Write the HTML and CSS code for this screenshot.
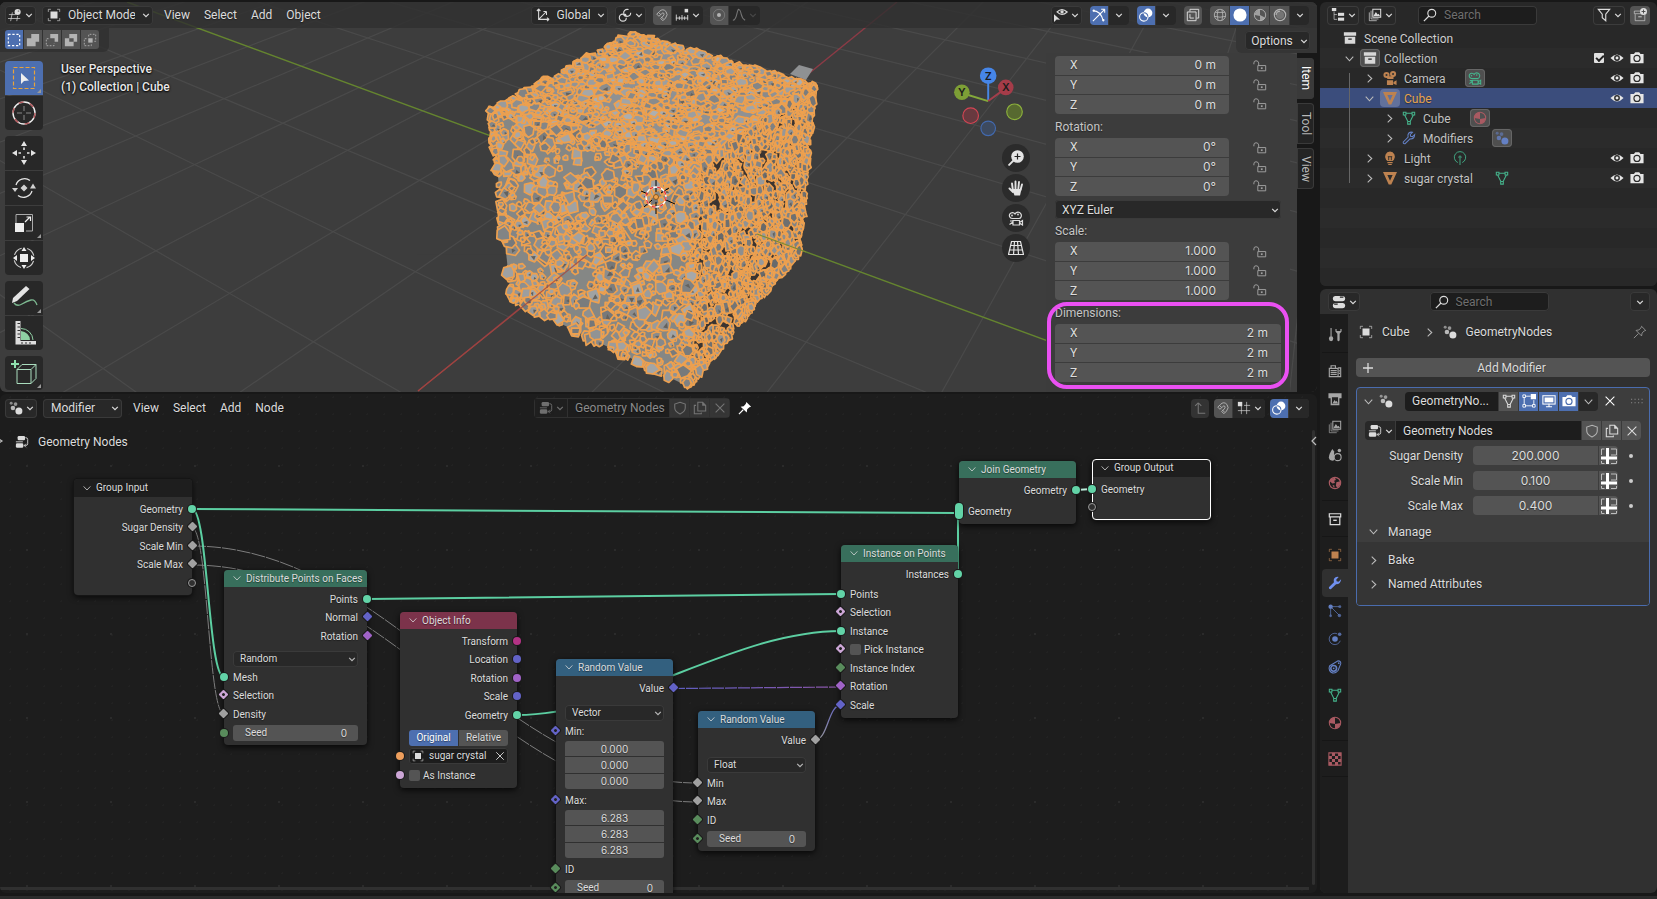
FILE: index.html
```html
<!DOCTYPE html>
<html lang="en">
<head>
<meta charset="utf-8">
<title>Geometry Nodes – Cube</title>
<link rel="stylesheet" href="styles.css">
</head>
<body class="app">
<svg class="defs" aria-hidden="true">
  <symbol id="chev" viewBox="0 0 10 10"><path d="M1.500 3.500 5 7l3.500-3.500" fill="none" stroke="currentColor" stroke-width="1.500"/></symbol>
  <symbol id="right" viewBox="0 0 10 10"><path d="M3 .8 7.500 5 3 9.200" fill="none" stroke="currentColor" stroke-width="1.200"/></symbol>
  <symbol id="down" viewBox="0 0 10 10"><path d="M.8 3 5 7.500 9.200 3" fill="none" stroke="currentColor" stroke-width="1.200"/></symbol>
  <symbol id="view3d" viewBox="0 0 16 16"><path d="M1 7.500h8M0 12h14M5 5 3 15M11 9l-1 6" fill="none" stroke="currentColor" opacity=".8"/><circle cx="11" cy="4.500" r="3.500" fill="currentColor"/><circle cx="12" cy="3.500" r="1" fill="#888"/></symbol>
  <symbol id="object" viewBox="0 0 16 16"><path d="M1.500 4.500v-3h3M11.500 1.500h3v3M14.500 11.500v3h-3M4.500 14.500h-3v-3" fill="none" stroke="currentColor" opacity=".7"/><rect x="4" y="4" width="8" height="8" fill="currentColor"/></symbol>
  <symbol id="axes" viewBox="0 0 16 16"><path d="M3 1v12h12M3 1 1 3.500M3 1l2 2.500M15 13l-2.500-2M15 13l-2.500 2M3 13l9-9M12 4v4M12 4H8.500" fill="none" stroke="currentColor" stroke-width="1.200"/></symbol>
  <symbol id="pivot" viewBox="0 0 16 16"><circle cx="10.500" cy="5.500" r="4" fill="none" stroke="currentColor" stroke-width="1.300" stroke-dasharray="20 5"/><circle cx="5.500" cy="11" r="4" fill="none" stroke="currentColor" stroke-width="1.300" stroke-dasharray="20 5"/><circle cx="8" cy="8.200" r="1.600" fill="currentColor"/></symbol>
  <symbol id="magnet" viewBox="0 0 16 16"><path d="M2 6.500 5 3.500Q9-.5 12.500 3.500 15.500 7 12 11l-3 3-2.500-2.500 3-3Q11 6.500 10 5.500 9 4.500 7.500 6l-3 3zM4 4.500 6.500 7M7 9.500l3 3" fill="none" stroke="currentColor" stroke-width="1.100" transform="translate(0 .5)"/></symbol>
  <symbol id="snapinc" viewBox="0 0 16 16"><path d="M1 11.500h14M1.500 7.500v7M5 9.500v4M8 8v6M11 9.500v4M14.500 8v6" fill="none" stroke="currentColor"/><rect x="11" y="1" width="4" height="4" fill="currentColor"/></symbol>
  <symbol id="prop" viewBox="0 0 16 16"><circle cx="8" cy="8" r="6.500" fill="none" stroke="currentColor" opacity=".4"/><circle cx="8" cy="8" r="2.300" fill="currentColor"/></symbol>
  <symbol id="falloff" viewBox="0 0 16 16"><path d="M1 14Q4 14 5.500 7T8 2q1.500 0 2.500 5T15 14" fill="none" stroke="currentColor" stroke-width="1.200"/></symbol>
  <symbol id="visible" viewBox="0 0 16 16"><path d="M0 7v9l3-2.800 4 .1z" fill="currentColor"/><path d="M3.500 4.500Q9-1 15 4.500 9 10 3.500 4.500z" fill="none" stroke="currentColor" stroke-width="1.400"/><circle cx="9.200" cy="4.400" r="1.900" fill="currentColor"/></symbol>
  <symbol id="gizmo" viewBox="0 0 16 16"><path d="M1 3Q10 3 13 15M1 15 14.500 1.500M14.500 1.500v4M14.500 1.500h-4" fill="none" stroke="currentColor" stroke-width="1.200"/><circle cx="2" cy="3" r="1.300" fill="currentColor"/><circle cx="13" cy="14" r="1.300" fill="currentColor"/></symbol>
  <symbol id="overlay" viewBox="0 0 16 16"><circle cx="10.300" cy="5.700" r="5" fill="currentColor"/><circle cx="5.500" cy="10.200" r="4.800" fill="none" stroke="currentColor" stroke-width="1.200"/><path d="M5.500 5.500A4.800 4.800 0 0 1 10.200 10" fill="none" stroke="#4d6fb0" stroke-width="1.200"/></symbol>
  <symbol id="xray" viewBox="0 0 16 16"><path d="M1.500 4.500h10v10h-10zM4.500 4V1.500h10v10H12M4.500 7v4.500h4.500" fill="none" stroke="currentColor" stroke-width="1.100"/></symbol>
  <symbol id="wire" viewBox="0 0 16 16"><g fill="none" stroke="currentColor"><circle cx="8" cy="8" r="6.500"/><path d="M1.500 9.500q6.500 2 13 0M2.500 5h11M5.800 2q-2 6 0 12.200M10.200 2q2 6 0 12.200"/></g></symbol>
  <symbol id="solid" viewBox="0 0 16 16"><circle cx="8" cy="8" r="7.500" fill="currentColor"/></symbol>
  <symbol id="matprev" viewBox="0 0 16 16"><circle cx="8" cy="8" r="6.500" fill="none" stroke="currentColor"/><path d="M8 1.500V8l6 3A6.500 6.500 0 0 1 8 14.500V9L2 8A6.500 6.500 0 0 1 8 1.500z" fill="currentColor" opacity=".8"/></symbol>
  <symbol id="rendered" viewBox="0 0 16 16"><circle cx="8" cy="8" r="6.500" fill="none" stroke="currentColor" stroke-width="1.300"/><circle cx="8" cy="8" r="4.600" fill="currentColor" opacity=".35"/><path d="M3.500 8A4.500 4.500 0 0 1 8 3.500" fill="none" stroke="currentColor" stroke-width="1.300"/></symbol>
  <symbol id="sel1" viewBox="0 0 16 16"><rect x="1.500" y="1.500" width="13" height="13" fill="none" stroke="currentColor" stroke-width="1.300" stroke-dasharray="2.600 2"/></symbol>
  <symbol id="sel2" viewBox="0 0 16 16"><path d="M6 1h9v9h-4v5H1V6h5z" fill="currentColor"/></symbol>
  <symbol id="sel3" viewBox="0 0 16 16"><path d="M6 1h9v9h-4V6H6z" fill="currentColor"/><path d="M4 6.500H1.500v8h9V12" fill="none" stroke="currentColor" stroke-dasharray="2 1.600"/></symbol>
  <symbol id="sel4" viewBox="0 0 16 16"><path d="M6 1h9v9h-4v5H1V6h5zM6 6v4h5V6z" fill="currentColor" fill-rule="evenodd"/></symbol>
  <symbol id="sel5" viewBox="0 0 16 16"><rect x="6" y="6" width="5" height="5" fill="currentColor"/><path d="M6.500 4V1.500h8v8H12M4 6.500H1.500v8h8V12" fill="none" stroke="currentColor" stroke-dasharray="2 1.600"/></symbol>
  <symbol id="lock" viewBox="0 0 16 16"><path d="M1 6V4.500Q1 2 3.500 2t3 2.500V7.500M5.500 7.500h9v6h-9z" fill="none" stroke="currentColor" stroke-width="1.100"/><rect x="9" y="9.500" width="2" height="2" fill="currentColor"/></symbol>
  <symbol id="nodes" viewBox="0 0 16 16"><circle cx="11.300" cy="11.300" r="4" fill="currentColor"/><circle cx="4.500" cy="8" r="2.600" fill="currentColor" opacity=".8"/><circle cx="2.500" cy="2.500" r="1.700" fill="currentColor" opacity=".55"/><circle cx="7.500" cy="3.500" r="2.100" fill="currentColor" opacity=".6"/></symbol>
  <symbol id="tree" viewBox="0 0 16 16"><rect x="3" y="1" width="8.500" height="5" rx="1.500" fill="currentColor"/><rect x="1" y="9.500" width="8.500" height="5" rx="1.500" fill="currentColor"/><path d="M1 7.800h8M12 3q2.500 0 2.500 2v5q0 2-2.500 2h-1.500m2-2-2 2 2 2" fill="none" stroke="currentColor"/></symbol>
  <symbol id="shield" viewBox="0 0 16 16"><path d="M8 1.500 14 3.500V8q0 4-6 6.800Q2 12 2 8V3.500z" fill="none" stroke="currentColor" stroke-width="1.200"/></symbol>
  <symbol id="dup" viewBox="0 0 16 16"><path d="M5.500 1.500H11L14.500 5v6.500h-9zM3.500 5h-2v9.500h8V13" fill="none" stroke="currentColor" stroke-width="1.200"/><path d="M10.500 1v4.500H15z" fill="currentColor"/></symbol>
  <symbol id="x" viewBox="0 0 16 16"><path d="m3 3 10 10m0-10-10 10" fill="none" stroke="currentColor" stroke-width="1.200"/></symbol>
  <symbol id="pin" viewBox="0 0 16 16"><path d="M9.500 1 15 6.500l-2 .5-2.500 2.500-.5 3.500L3 6.500 6.500 6 9 3.200z" fill="currentColor"/><path d="M6 10 1 15" stroke="currentColor" stroke-width="1.300"/></symbol>
  <symbol id="pinline" viewBox="0 0 16 16"><path d="M9.800 1.500 14.500 6.200l-1.700.6-2.400 2.400-.6 3.300L3.500 6.200 6.800 5.600 9.200 3.200zM6.200 9.800 1 15" fill="none" stroke="currentColor"/></symbol>
  <symbol id="up" viewBox="0 0 16 16"><path d="M6 2v12h8M6 2 2.500 5.500M6 2l3.500 3.500" fill="none" stroke="currentColor" stroke-width="1.200"/></symbol>
  <symbol id="snapgrid" viewBox="0 0 16 16"><path d="M5 5v10M11 1v14M1 11h14M8 5h7" fill="none" stroke="currentColor" opacity=".75"/><rect x="1" y="1" width="5" height="5" fill="currentColor"/></symbol>
  <symbol id="outliner" viewBox="0 0 16 16"><rect x="1" y="0" width="5" height="3.500" fill="currentColor"/><rect x="8" y="5.500" width="7" height="3.500" fill="currentColor"/><rect x="8" y="11" width="7" height="3.500" fill="currentColor"/><path d="M3.500 4v9H7M3.500 7.500H7" fill="none" stroke="currentColor" opacity=".7"/></symbol>
  <symbol id="images" viewBox="0 0 16 16"><path d="M5.500 1.500h9v9h-9z" fill="none" stroke="currentColor" stroke-width="1.200"/><path d="m6 9.500 3-5 2 3 1-1 2 3z" fill="currentColor"/><path d="M3.500 3v9.500H12M1.500 5v9.500H10" fill="none" stroke="currentColor" opacity=".8"/></symbol>
  <symbol id="search" viewBox="0 0 16 16"><circle cx="10" cy="6" r="4.500" fill="none" stroke="currentColor" stroke-width="1.300"/><path d="M6.800 9.200 1 15" stroke="currentColor" stroke-width="1.400"/></symbol>
  <symbol id="filter" viewBox="0 0 16 16"><path d="M1.500 1.500h13L10 7v7.500L6 11V7z" fill="none" stroke="currentColor" stroke-width="1.300"/></symbol>
  <symbol id="newcoll" viewBox="0 0 16 16"><path d="M8 3.500H1.500V6.500h12M2.500 7v7.500h11V8" fill="none" stroke="currentColor" opacity=".7"/><path d="M6 10h4" stroke="currentColor" stroke-width="1.400" opacity=".7"/><circle cx="12" cy="4" r="4" fill="currentColor"/><path d="M12 1.800v4.400M9.800 4h4.400" stroke="#444"/></symbol>
  <symbol id="box" viewBox="0 0 16 16"><path d="M1 1.500h14v4H1zM2 6.500h12v8H2z" fill="currentColor"/><rect x="6" y="8.500" width="4" height="1.600" fill="#333"/></symbol>
  <symbol id="boxline" viewBox="0 0 16 16"><path d="M1.500 2h13v3.500h-13zM2.500 6v8.500h11V6" fill="none" stroke="currentColor" stroke-width="1.400"/><path d="M6 9.500h4" stroke="currentColor" stroke-width="1.600"/></symbol>
  <symbol id="eye" viewBox="0 0 16 16"><path d="M.5 8Q8 0 15.500 8 8 16 .5 8z" fill="currentColor"/><circle cx="8" cy="8" r="3.300" fill="#282828"/><circle cx="8" cy="8" r="1.700" fill="currentColor"/></symbol>
  <symbol id="photo" viewBox="0 0 16 16"><path d="M.5 3.500h4L6 1.500h4.500L12 3.500h3.500V14H.5z" fill="currentColor"/><circle cx="8" cy="8.500" r="3.500" fill="none" stroke="#2c2c2c" stroke-width="1.300"/></symbol>
  <symbol id="photoblue" viewBox="0 0 16 16"><path d="M.5 3.500h4L6 1.500h4.500L12 3.500h3.500V14H.5z" fill="currentColor"/><circle cx="8" cy="8.500" r="3.500" fill="none" stroke="#4d6fb0" stroke-width="1.300"/></symbol>
  <symbol id="movie" viewBox="0 0 16 16"><circle cx="4" cy="4.500" r="3.500" fill="currentColor"/><circle cx="11.500" cy="3.500" r="3.500" fill="currentColor"/><path d="M4 6h8v3H5zM4.500 10.500h7V16h-7zM12 12.500l3.500-2V16L12 14.500z" fill="currentColor"/><circle cx="4" cy="4.500" r="1.200" fill="#333"/><circle cx="11.500" cy="3.500" r="1.200" fill="#333"/></symbol>
  <symbol id="movieline" viewBox="0 0 16 16"><path d="M4 8.500a3 3 0 1 1 3-4.500 3.300 3.300 0 1 1 6 3q-.5 1.500-2 1.500zM5 10.500h6.500V15H5zM11.500 12.500l3-2V15l-3-2M2 11h3M1.500 14.500 5 12" fill="none" stroke="currentColor" stroke-width="1.200"/><circle cx="4" cy="5.500" r=".9" fill="currentColor"/><circle cx="10" cy="4.500" r=".9" fill="currentColor"/></symbol>
  <symbol id="tri" viewBox="0 0 16 16"><path d="M0 1h16L9.500 15.500h-3zM5 4.500 8 11l3-6.500z" fill="currentColor" fill-rule="evenodd"/></symbol>
  <symbol id="mesh" viewBox="0 0 16 16"><path d="M4.500 2.500h7M3 4.500l4 8M13 4.500l-4 8M1.500 1.500h3v3h-3zM11.500 1.500h3v3h-3zM6.500 12h3v3h-3z" fill="none" stroke="currentColor" stroke-width="1.200"/></symbol>
  <symbol id="wrenchline" viewBox="0 0 16 16"><path d="M14.500 4 12 6.500 9.800 6 9.500 4 12 1.500Q8 .5 6.800 4.500L7 7 1.500 12.500q-.5 2.500 2 2L9.200 9q5 .5 5.300-5z" fill="none" stroke="currentColor" stroke-width="1.200"/></symbol>
  <symbol id="wrench" viewBox="0 0 16 16"><path d="M15 3.800 12 6.500 9.800 6 9.500 4 12.200 1Q7.500.5 6.500 4.500L6.800 7 1 12.800q-.3 2.700 2.200 2.400L9.200 9.500q5.500 0 5.800-5.700z" fill="currentColor"/></symbol>
  <symbol id="bulb" viewBox="0 0 16 16"><path d="M8 .5a6 6 0 0 1 4.500 9.500L11 11.500H5L3.500 10A6 6 0 0 1 8 .5zM5 12.500h6V14H5zM6 14.800h4V16H6z" fill="currentColor"/><path d="M5.500 6.500h5M6.500 6.500v4M9.500 6.500v4" fill="none" stroke="#282828"/></symbol>
  <symbol id="lightdata" viewBox="0 0 16 16"><path d="M5.500 13.200a6.500 6.500 0 1 1 5 0M8 9v7" fill="none" stroke="currentColor"/><circle cx="8" cy="7" r="1.300" fill="none" stroke="currentColor"/></symbol>
  <symbol id="sphere" viewBox="0 0 16 16"><circle cx="8" cy="8" r="6.500" fill="none" stroke="currentColor" stroke-width="1.200"/><path d="M8 1.500V9L1.500 8A6.500 6.500 0 0 1 8 1.500zM8 9l6.300-1A6.500 6.500 0 0 1 8 14.500z" fill="currentColor"/></symbol>
  <symbol id="propsed" viewBox="0 0 16 16"><rect x="1" y="1" width="14" height="6" rx="3" fill="currentColor"/><rect x="1" y="9" width="14" height="6" rx="3" fill="currentColor"/><path d="M9 2.500h4M2.500 10.500h4" stroke="#222" stroke-width="1.500"/></symbol>
  <symbol id="tool" viewBox="0 0 16 16"><path d="M3.500 0v9" stroke="currentColor" stroke-width="1.300"/><path d="M3.500 9Q6 9 6 12t-2.500 3Q1 15 1 12t2.500-3zM8.500 1v3l2.200 2.500V14q1.300 2 2.600 0V6.500L15.500 4V1h-1.300v2.500h-4.400V1z" fill="currentColor"/></symbol>
  <symbol id="render" viewBox="0 0 16 16"><path d="M1.500 5h10v9.500h-10zM3.500 5V2h5v3M11.500 4.500h3v10h-3" fill="none" stroke="currentColor" stroke-width="1.300"/><path d="M3 7.500h7M3 9.800h7M3 12h7M13 7v1.500M13 10v1.500" stroke="currentColor" stroke-width="1.300"/></symbol>
  <symbol id="output" viewBox="0 0 16 16"><path d="M.5 1.500h15V7h-2.500v8H3V7H.5z" fill="currentColor"/><path d="M4.500 6h7v7.500h-7z" fill="#222"/><path d="m5 13 2.500-4L9 11l1-1 1.500 3z" fill="currentColor"/></symbol>
  <symbol id="scene" viewBox="0 0 16 16"><path d="M5 1Q1 7 1 10.500 1 14 5 14.500l2-.5V4z" fill="currentColor"/><circle cx="11" cy="10.500" r="4" fill="none" stroke="currentColor" stroke-width="1.300"/><circle cx="13" cy="2.800" r="2" fill="currentColor"/></symbol>
  <symbol id="world" viewBox="0 0 16 16"><circle cx="8" cy="8" r="6.500" fill="none" stroke="currentColor" stroke-width="1.300"/><path d="M3 3.500 8 2l1 2.500-2 1L8 8 5 8.500 2 6zM9.500 7l4.500-1v4l-3 3.500-2-2zM5 10l2.500 1L7 14z" fill="currentColor"/></symbol>
  <symbol id="particles" viewBox="0 0 16 16"><path d="M3 3v10M3 3l10 10M3 3h10" stroke="currentColor" opacity=".8"/><circle cx="3" cy="3" r="2.500" fill="currentColor"/><circle cx="13.500" cy="3" r="1.700" fill="currentColor" opacity=".7"/><circle cx="13" cy="13" r="2" fill="currentColor" opacity=".7"/><circle cx="3" cy="13.500" r="1.500" fill="currentColor" opacity=".7"/></symbol>
  <symbol id="physics" viewBox="0 0 16 16"><path d="M10.500 2A6.500 6.500 0 1 0 14 10" fill="none" stroke="currentColor" opacity=".8"/><circle cx="8" cy="8" r="3.200" fill="currentColor"/><circle cx="13.300" cy="2.700" r="2" fill="currentColor" opacity=".8"/></symbol>
  <symbol id="constraint" viewBox="0 0 16 16"><circle cx="6.500" cy="9.500" r="3.300" fill="none" stroke="currentColor" stroke-width="1.800"/><circle cx="6.500" cy="9.500" r="1" fill="currentColor"/><path d="M2 6.500 11.500 1q3.500 0 3 3.500L11.500 12Q8 16.500 3.500 14 0 11 2 6.500z" fill="none" stroke="currentColor" stroke-width="1.200"/><circle cx="12.300" cy="3.700" r="1" fill="currentColor"/></symbol>
  <symbol id="texture" viewBox="0 0 16 16"><path d="M1 1h14v14H1z" fill="none" stroke="currentColor" stroke-width="1.200"/><path d="M4.500 1H8v3.500H4.500zM11.500 1H15v3.500h-3.500zM1 4.500h3.500V8H1zM8 4.500h3.500V8H8zM4.500 8H8v3.500H4.500zM11.500 8H15v3.500h-3.500zM1 11.500h3.500V15H1zM8 11.500h3.500V15H8z" fill="currentColor"/></symbol>
  <symbol id="attr" viewBox="0 0 16 16"><path d="M5 0h3v16H5zM0 8.500h16v3H0z" fill="#fff"/><path d="M3.500 1H.5v6M10 7h5.500V1H10M.5 13v2.500h3M10 15.500h5.500V13" fill="none" stroke="#bdbdbd"/></symbol>
  <symbol id="edit" viewBox="0 0 16 16"><path d="M4 2.500h6M2.500 4v8M4 13.500h8M13.500 12V7M1 1h3v3H1zM1 12h3v3H1zM12 12h3v3h-3z" fill="none" stroke="currentColor"/><rect x="10" y="0" width="6" height="6" fill="currentColor"/></symbol>
  <symbol id="display" viewBox="0 0 16 16"><rect x="1" y="2" width="14" height="9.500" fill="none" stroke="currentColor" stroke-width="1.200"/><rect x="3" y="4" width="10" height="5.500" fill="currentColor"/><path d="M8 11v3M4.500 14.500h7" stroke="currentColor" stroke-width="1.200"/></symbol>
  <symbol id="grip" viewBox="0 0 12 12"><path d="M0 4.500h12M0 7.500h12" stroke="#888" stroke-width="1" stroke-dasharray="1 2"/></symbol>
</svg>

<main class="work">
  <section class="panel viewport" aria-label="3D viewport">
    <svg class="scene" viewBox="0 2 1317 390" preserveAspectRatio="xMinYMin slice" aria-hidden="true">
      <g id="grid" stroke="#4a4a4a" stroke-width="1.200"></g>
      <path d="M127 2 L1317 440" stroke="#65852f" stroke-width="1.400"/>
      <path d="M418 391 L897 2" stroke="#8c3b46" stroke-width="1.400"/>
      <path d="M790 74 799 65 813 69 806 80z" fill="#8f9193"/>
      <g id="crystals"></g>
      <path d="M418 391 L587 255" stroke="#a5483f" stroke-width="1.200" opacity=".8"/>
      <path d="M757 234 L806 252" stroke="#7d8c30" stroke-width="1.200"/>
      <g fill="none"><path d="M656 180v12M656 202v12M641 191l7 3M666 200l9 4M644 207l8-7M661 193l8-5" stroke="#000"/><circle cx="656" cy="197" r="10" stroke="#fff" stroke-width="1.300"/><circle cx="656" cy="197" r="10" stroke="#e33" stroke-width="1.300" stroke-dasharray="4 4"/><circle cx="656" cy="197" r="2.500" stroke="#8a5a20" fill="#f0a24c"/></g>
    </svg>
    <header class="bar vp-bar">
      <div class="side-l">
        <button class="btn drop" aria-label="Editor type"><svg class="i"><use href="#view3d"/></svg><svg class="c"><use href="#chev"/></svg></button>
        <label class="pick mode"><svg class="i"><use href="#object"/></svg><select aria-label="Mode"><option>Object Mode</option></select><svg class="c"><use href="#chev"/></svg></label>
        <nav class="menu"><a href="#">View</a><a href="#">Select</a><a href="#">Add</a><a href="#">Object</a></nav>
      </div>
      <div class="mid vp-mid">
        <label class="pick orient"><svg class="i"><use href="#axes"/></svg><select aria-label="Orientation"><option>Global</option></select><svg class="c"><use href="#chev"/></svg></label>
        <button class="btn drop" aria-label="Pivot point"><svg class="i"><use href="#pivot"/></svg><svg class="c"><use href="#chev"/></svg></button>
        <div class="join"><button class="btn tog dim" aria-label="Snap"><svg class="i"><use href="#magnet"/></svg></button><button class="btn drop" aria-label="Snap to"><svg class="i"><use href="#snapinc"/></svg><svg class="c"><use href="#chev"/></svg></button></div>
        <div class="join"><button class="btn tog dim" aria-label="Proportional editing"><svg class="i"><use href="#prop"/></svg></button><button class="btn drop faint" aria-label="Falloff"><svg class="i"><use href="#falloff"/></svg><svg class="c"><use href="#chev"/></svg></button></div>
      </div>
      <div class="side-r">
        <button class="btn drop" aria-label="Object visibility"><svg class="i"><use href="#visible"/></svg><svg class="c"><use href="#chev"/></svg></button>
        <div class="join"><button class="btn tog on" aria-label="Gizmos"><svg class="i"><use href="#gizmo"/></svg></button><button class="btn mini" aria-label="Gizmo options"><svg class="c"><use href="#chev"/></svg></button></div>
        <div class="join"><button class="btn tog on" aria-label="Overlays"><svg class="i"><use href="#overlay"/></svg></button><button class="btn mini" aria-label="Overlay options"><svg class="c"><use href="#chev"/></svg></button></div>
        <button class="btn tog" aria-label="X-ray"><svg class="i"><use href="#xray"/></svg></button>
        <div class="join shade"><button class="btn tog dim" aria-label="Wireframe"><svg class="i"><use href="#wire"/></svg></button><button class="btn tog on" aria-label="Solid"><svg class="i"><use href="#solid"/></svg></button><button class="btn tog dim" aria-label="Material preview"><svg class="i"><use href="#matprev"/></svg></button><button class="btn tog dim" aria-label="Rendered"><svg class="i"><use href="#rendered"/></svg></button><button class="btn mini" aria-label="Shading options"><svg class="c"><use href="#chev"/></svg></button></div>
      </div>
    </header>
    <div class="vp-main">
      <div class="vp-left">
        <div class="selmodes join"><button class="btn tog on" aria-label="Set"><svg class="i"><use href="#sel1"/></svg></button><button class="btn tog dim" aria-label="Extend"><svg class="i"><use href="#sel2"/></svg></button><button class="btn tog dim" aria-label="Subtract"><svg class="i"><use href="#sel3"/></svg></button><button class="btn tog dim" aria-label="Difference"><svg class="i"><use href="#sel4"/></svg></button><button class="btn tog dim" aria-label="Intersect"><svg class="i"><use href="#sel5"/></svg></button></div>
        <div class="vp-row">
          <div class="tools">
            <div class="tgroup">
              <button class="t on more" aria-label="Select box"><svg viewBox="0 0 24 24"><rect x="1.500" y="1.500" width="21" height="21" fill="none" stroke="#e8a33b" stroke-width="1.200" stroke-dasharray="4 2"/><path d="M9 7v11l3-3 5-.5z" fill="#eee"/></svg></button>
              <button class="t" aria-label="Cursor"><svg viewBox="0 0 24 24"><g fill="none"><circle cx="12" cy="12" r="11" stroke="#eee" stroke-width="1.400"/><circle cx="12" cy="12" r="11" stroke="#b0565a" stroke-width="1.400" stroke-dasharray="5 6.500"/><path d="M12 5v5M12 14v5M5 12h5M14 12h5" stroke="#888"/></g></svg></button>
            </div>
            <div class="tgroup">
              <button class="t" aria-label="Move"><svg viewBox="0 0 24 24"><path d="m12 0 3 5H9zM12 24l3-5H9zM0 12l5-3v6zM24 12l-5-3v6zM11.200 6.500h1.600V9h-1.600zM11.200 15h1.600v2.500h-1.600zM6.500 11.200H9v1.600H6.500zM15 11.200h2.500v1.600H15z" fill="#e4e4e4"/></svg></button>
              <button class="t" aria-label="Rotate"><svg viewBox="0 0 24 24"><path d="M4 9A9 9 0 0 1 18 4.500M6 19.500a9 9 0 0 0 14-4.500" fill="none" stroke="#e4e4e4" stroke-width="1.300"/><path d="M0 12h6l-3 4zM18 12.500h6l-3-5zM12 8.500l3.500 3.500-3.500 3.500L8.500 12z" fill="#d0d0d0"/></svg></button>
              <button class="t more" aria-label="Scale"><svg viewBox="0 0 24 24"><path d="M4 12V3.500h16.500V20H14" fill="none" stroke="#aaa"/><path d="M3 12h9v9H3z" fill="#eee"/><path d="M13 11l5-5M14.500 6h4v4" fill="none" stroke="#eee" stroke-width="1.200"/></svg></button>
              <button class="t" aria-label="Transform"><svg viewBox="0 0 24 24"><circle cx="12" cy="12" r="10" fill="none" stroke="#ccc" stroke-width="1.200" stroke-dasharray="10 5.700" stroke-dashoffset="-3"/><path d="M8 8h8v8H8zM12 1l2.500 4h-5zM12 23l2.500-4h-5zM1 12l4-3v6zM23 12l-4-3v6z" fill="#eee"/></svg></button>
            </div>
            <div class="tgroup">
              <button class="t more" aria-label="Annotate"><svg viewBox="0 0 24 24"><path d="M2 17q3 4 8 1t9-4 6 5" fill="none" stroke="#7cb890" stroke-width="1.300"/><path d="m0 17 1-5L14 0l3.500 3L5 15z" fill="#e4e4e4"/></svg></button>
              <button class="t" aria-label="Measure"><svg viewBox="0 0 24 24"><path d="M3.500 0h5v20H24v3.500H3.500z" fill="#ddd"/><path d="M8 2.500H5.500M8 6H5.500M8 9.500H5.500M8 13H5.500M8 16.500H5.500M10 23v-2M14 23v-2M18 23v-2" stroke="#333"/><path d="M9 19V10a10 9 0 0 1 9 9z" fill="#8fd0a4"/><path d="M9 7.500A12 12 0 0 1 21 19" fill="none" stroke="#8fd0a4"/></svg></button>
            </div>
            <div class="tgroup">
              <button class="t more" aria-label="Add cube"><svg viewBox="0 0 24 24"><path d="M5 8.500h14v14H5zM5 8.500l5-5h14l-5 5M24 3.500v14l-5 5" fill="none" stroke="#a9dcbd"/><path d="M3-1v8M-1 3h8" stroke="#8fe0ae" stroke-width="2"/></svg></button>
            </div>
          </div>
          <p class="info">User Perspective<br>(1) Collection | Cube</p>
        </div>
      </div>
      <div class="nav">
        <svg class="axis" viewBox="946 65 100 79" role="img" aria-label="Orientation gizmo">
          <path d="M988 102V80" stroke="#4787e6" stroke-width="2"/><path d="M988 102 965 95" stroke="#84a93b" stroke-width="2"/><path d="M988 102l15-11" stroke="#a33f4b" stroke-width="2"/>
          <circle cx="1006" cy="88" r="8" fill="#a53c49"/><circle cx="961" cy="93" r="8" fill="#7d9f36"/><circle cx="988" cy="76" r="8.500" fill="#4686e8"/>
          <circle cx="970" cy="117" r="8" fill="#68393f" stroke="#d44554" stroke-width="1.200"/><circle cx="1015" cy="113" r="8" fill="#576930" stroke="#8cb03c" stroke-width="1.200"/><circle cx="988" cy="130" r="7.500" fill="#3d4a5f" stroke="#4269ae" stroke-width="1.200"/>
          <text x="1006" y="92">X</text><text x="961" y="97">Y</text><text x="988" y="80">Z</text>
        </svg>
        <button class="n" aria-label="Zoom"><svg viewBox="0 0 16 16"><circle cx="9.500" cy="6.500" r="6.300" fill="#e4e4e4"/><path d="M6 10 .5 15.500" stroke="#e4e4e4" stroke-width="1.800"/><path d="M9.500 3.500v6M6.500 6.500h6" stroke="#222" stroke-width="1.200"/></svg></button>
        <button class="n" aria-label="Pan"><svg viewBox="0 0 16 16"><path d="M5 11 4 3.500M7.500 9V1.500M10.300 9l.7-7M12.500 10l1.500-5.500M5 12 1.500 8.500" stroke="#e4e4e4" stroke-width="1.900" stroke-linecap="round"/><path d="M4 9h9.500L12 15.500H6.500z" fill="#e4e4e4"/></svg></button>
        <button class="n" aria-label="Camera view"><svg><use href="#movieline"/></svg></button>
        <button class="n" aria-label="Perspective"><svg viewBox="0 0 16 16"><path d="M3.500 1.500h9l3 13H.5zM2.500 5.500h11M1.500 10h13M6.500 1.500l-1 13M9.500 1.500l1 13" fill="none" stroke="#e4e4e4" stroke-width="1.200"/></svg></button>
      </div>
      <div class="vp-right">
        <div class="options"><button class="btn opt">Options <svg class="c"><use href="#chev"/></svg></button></div>
        <div class="vp-side">
          <div class="npanel">
            <div class="vec"><div class="nums"><label class="num"><span>X</span><input value="0 m"></label><label class="num"><span>Y</span><input value="0 m"></label><label class="num"><span>Z</span><input value="0 m"></label></div><div class="locks"><button aria-label="Lock X"><svg class="i"><use href="#lock"/></svg></button><button aria-label="Lock Y"><svg class="i"><use href="#lock"/></svg></button><button aria-label="Lock Z"><svg class="i"><use href="#lock"/></svg></button></div></div>
            <h3>Rotation:</h3>
            <div class="vec"><div class="nums"><label class="num"><span>X</span><input value="0°"></label><label class="num"><span>Y</span><input value="0°"></label><label class="num"><span>Z</span><input value="0°"></label></div><div class="locks"><button aria-label="Lock X"><svg class="i"><use href="#lock"/></svg></button><button aria-label="Lock Y"><svg class="i"><use href="#lock"/></svg></button><button aria-label="Lock Z"><svg class="i"><use href="#lock"/></svg></button></div></div>
            <label class="pick euler"><select aria-label="Rotation mode"><option>XYZ Euler</option></select><svg class="c"><use href="#chev"/></svg></label>
            <h3>Scale:</h3>
            <div class="vec"><div class="nums"><label class="num"><span>X</span><input value="1.000"></label><label class="num"><span>Y</span><input value="1.000"></label><label class="num"><span>Z</span><input value="1.000"></label></div><div class="locks"><button aria-label="Lock X"><svg class="i"><use href="#lock"/></svg></button><button aria-label="Lock Y"><svg class="i"><use href="#lock"/></svg></button><button aria-label="Lock Z"><svg class="i"><use href="#lock"/></svg></button></div></div>
            <div class="marked">
              <h3>Dimensions:</h3>
              <div class="vec"><div class="nums wide"><label class="num"><span>X</span><input value="2 m"></label><label class="num"><span>Y</span><input value="2 m"></label><label class="num"><span>Z</span><input value="2 m"></label></div></div>
            </div>
          </div>
          <div class="vtabs"><button class="on">Item</button><button>Tool</button><button>View</button></div>
        </div>
      </div>
    </div>
  </section>

  <section class="panel editor" aria-label="Geometry node editor">
    <svg class="wires" width="1317" height="499" viewBox="0 394 1317 499" aria-hidden="true">
      <defs><linearGradient id="g1" gradientUnits="userSpaceOnUse" x1="673" y1="0" x2="841" y2="0"><stop offset="0" stop-color="#5e5ec0"/><stop offset="1" stop-color="#8c55a8"/></linearGradient>
      <linearGradient id="g2" gradientUnits="userSpaceOnUse" x1="815" y1="740" x2="841" y2="705"><stop offset="0" stop-color="#999"/><stop offset="1" stop-color="#6262c4"/></linearGradient></defs>
      <g fill="none" stroke="#7d7d7d"><path d="M192 528C208 528 208 714 224 714M192 546C390 546 500 783 698 783M192 565C390 565 500 802 698 802" stroke-dasharray="14 1"/>
      <path d="M815 740C828 740 828 705 841 705" stroke="url(#g2)" stroke-width="1.300"/><path d="M673 688.500 841 687" stroke="url(#g1)" stroke-width="1.200" stroke-dasharray="12 1"/></g>
      <g fill="none" stroke="#5ccfa2" stroke-width="2"><path d="M192 509 958 513M192 509C208 509 208 677 224 677M367 599 841 594M517 715C625 715 733 631 841 631M958 573V513"/><path d="M1076 490 1092 489" stroke="#bfeedd"/></g>
    </svg>
    <header class="bar ne-bar">
      <div class="side-l">
        <button class="btn drop" aria-label="Editor type"><svg class="i"><use href="#nodes"/></svg><svg class="c"><use href="#chev"/></svg></button>
        <label class="pick modif"><select aria-label="Node tree context"><option>Modifier</option></select><svg class="c"><use href="#chev"/></svg></label>
        <nav class="menu"><a href="#">View</a><a href="#">Select</a><a href="#">Add</a><a href="#">Node</a></nav>
      </div>
      <div class="mid ne-mid">
        <div class="join faded"><button class="btn drop" aria-label="Browse node tree"><svg class="i"><use href="#tree"/></svg><svg class="c"><use href="#chev"/></svg></button><input class="treename" aria-label="Node tree" value="Geometry Nodes"><button class="btn tog" aria-label="Fake user"><svg class="i"><use href="#shield"/></svg></button><button class="btn tog" aria-label="Duplicate"><svg class="i"><use href="#dup"/></svg></button><button class="btn tog" aria-label="Unlink"><svg class="i"><use href="#x"/></svg></button></div>
        <button class="bare" aria-label="Pin"><svg class="i"><use href="#pin"/></svg></button>
      </div>
      <div class="side-r">
        <button class="btn tog upbtn" aria-label="Parent tree"><svg class="i"><use href="#up"/></svg></button>
        <div class="join"><button class="btn tog dim" aria-label="Snap"><svg class="i"><use href="#magnet"/></svg></button><button class="btn drop" aria-label="Snap to"><svg class="i"><use href="#snapgrid"/></svg><svg class="c"><use href="#chev"/></svg></button></div>
        <div class="join"><button class="btn tog on" aria-label="Overlays"><svg class="i"><use href="#overlay"/></svg></button><button class="btn mini" aria-label="Overlay options"><svg class="c"><use href="#chev"/></svg></button></div>
      </div>
    </header>
    <div class="crumb"><svg class="i"><use href="#tree"/></svg><span>Geometry Nodes</span></div>
    <span class="vscroll"></span><span class="hscroll"></span>
    <button class="expand" aria-label="Show sidebar"><svg viewBox="0 0 6 10"><path d="M5 1 1 5l4 4" fill="none" stroke="currentColor" stroke-width="1.200"/></svg></button>
    <button class="expand shelf" aria-label="Show toolbar"><svg viewBox="0 0 6 10"><path d="m-1 3 3 2-3 2" fill="none" stroke="currentColor" stroke-width="1.200"/></svg></button>

    <article class="node io n-in"><h4><svg class="c"><use href="#down"/></svg>Group Input</h4>
      <ul><li class="out">Geometry<i class="s geo"></i></li><li class="out">Sugar Density<i class="s d val"></i></li><li class="out">Scale Min<i class="s d val"></i></li><li class="out">Scale Max<i class="s d val"></i></li><li class="out"><i class="s empty"></i></li></ul></article>

    <article class="node n-dist"><h4 class="green"><svg class="c"><use href="#down"/></svg>Distribute Points on Faces</h4>
      <ul><li class="out">Points<i class="s geo"></i></li><li class="out">Normal<i class="s d vec3"></i></li><li class="out">Rotation<i class="s d rot"></i></li></ul>
      <label class="pick sm"><select aria-label="Distribution"><option>Random</option></select><svg class="c"><use href="#chev"/></svg></label>
      <ul class="near"><li>Mesh<i class="s geo"></i></li><li>Selection<i class="s d bool hole"></i></li><li>Density<i class="s d val"></i></li></ul>
      <label class="num seed"><span>Seed</span><input value="0"><i class="s int"></i></label></article>

    <article class="node n-info"><h4 class="red"><svg class="c"><use href="#down"/></svg>Object Info</h4>
      <ul><li class="out">Transform<i class="s mat"></i></li><li class="out">Location<i class="s vec3"></i></li><li class="out">Rotation<i class="s rot"></i></li><li class="out">Scale<i class="s vec3"></i></li><li class="out">Geometry<i class="s geo"></i></li></ul>
      <div class="two"><button class="on">Original</button><button>Relative</button></div>
      <div class="objref"><svg class="i"><use href="#object"/></svg><input aria-label="Object" value="sugar crystal"><button aria-label="Clear"><svg class="i"><use href="#x"/></svg></button><i class="s obj"></i></div>
      <ul class="inst"><li><label><input type="checkbox">As Instance</label><i class="s bool"></i></li></ul></article>

    <article class="node n-rv1"><h4 class="blue"><svg class="c"><use href="#down"/></svg>Random Value</h4>
      <ul><li class="out">Value<i class="s d vec3"></i></li></ul>
      <label class="pick sm far"><select aria-label="Data type"><option>Vector</option></select><svg class="c"><use href="#chev"/></svg></label>
      <ul class="near"><li>Min:<i class="s d vec3 hole"></i></li></ul>
      <div class="trio"><input aria-label="Min X" value="0.000"><input aria-label="Min Y" value="0.000"><input aria-label="Min Z" value="0.000"></div>
      <ul class="near"><li>Max:<i class="s d vec3 hole"></i></li></ul>
      <div class="trio"><input aria-label="Max X" value="6.283"><input aria-label="Max Y" value="6.283"><input aria-label="Max Z" value="6.283"></div>
      <ul class="near"><li>ID<i class="s d int"></i></li></ul>
      <label class="num seed"><span>Seed</span><input value="0"><i class="s d int hole"></i></label></article>

    <article class="node n-rv2"><h4 class="blue"><svg class="c"><use href="#down"/></svg>Random Value</h4>
      <ul><li class="out">Value<i class="s d val"></i></li></ul>
      <label class="pick sm far"><select aria-label="Data type"><option>Float</option></select><svg class="c"><use href="#chev"/></svg></label>
      <ul class="near"><li>Min<i class="s d val"></i></li><li>Max<i class="s d val"></i></li><li>ID<i class="s d int"></i></li></ul>
      <label class="num seed"><span>Seed</span><input value="0"><i class="s d int hole"></i></label></article>

    <article class="node n-iop"><h4 class="green"><svg class="c"><use href="#down"/></svg>Instance on Points</h4>
      <ul><li class="out">Instances<i class="s geo"></i></li></ul>
      <ul class="gap2"><li>Points<i class="s geo"></i></li><li>Selection<i class="s d bool hole"></i></li><li>Instance<i class="s geo"></i></li><li><label><input type="checkbox">Pick Instance</label><i class="s d bool hole"></i></li><li>Instance Index<i class="s d int"></i></li><li>Rotation<i class="s d rot"></i></li><li>Scale<i class="s d vec3"></i></li></ul></article>

    <article class="node n-join"><h4 class="green"><svg class="c"><use href="#down"/></svg>Join Geometry</h4>
      <ul><li class="out">Geometry<i class="s geo"></i></li></ul><ul class="gap3"><li>Geometry<i class="s geo multi"></i></li></ul></article>

    <article class="node io picked n-out"><h4><svg class="c"><use href="#down"/></svg>Group Output</h4>
      <ul><li>Geometry<i class="s geo"></i></li><li><i class="s empty"></i></li></ul></article>
  </section>
</main>

<aside class="side">
  <section class="panel outliner" aria-label="Outliner">
    <header class="bar ol-bar">
      <button class="btn drop" aria-label="Editor type"><svg class="i"><use href="#outliner"/></svg><svg class="c"><use href="#chev"/></svg></button>
      <button class="btn drop" aria-label="Display mode"><svg class="i"><use href="#images"/></svg><svg class="c"><use href="#chev"/></svg></button>
      <label class="find"><svg class="i"><use href="#search"/></svg><input type="text" placeholder="Search" aria-label="Search outliner"></label>
      <button class="btn drop last" aria-label="Filter"><svg class="i"><use href="#filter"/></svg><svg class="c"><use href="#chev"/></svg></button>
      <button class="btn tog" aria-label="New collection"><svg class="i"><use href="#newcoll"/></svg></button>
    </header>
    <ul class="rows">
      <li class="l0"><svg class="i"><use href="#box"/></svg><span>Scene Collection</span></li>
      <li class="l1"><svg class="tw"><use href="#down"/></svg><span class="chip"><svg class="i"><use href="#box"/></svg></span><span>Collection</span><span class="tail"><input type="checkbox" checked aria-label="Include collection"><svg class="i"><use href="#eye"/></svg><svg class="i"><use href="#photo"/></svg></span></li>
      <li class="l2"><svg class="tw"><use href="#right"/></svg><svg class="i big or"><use href="#movie"/></svg><span>Camera</span><span class="chip far gr"><svg class="i"><use href="#movieline"/></svg></span><span class="tail"><svg class="i"><use href="#eye"/></svg><svg class="i"><use href="#photo"/></svg></span></li>
      <li class="l2 sel"><svg class="tw"><use href="#down"/></svg><span class="chip or bl"><svg class="i"><use href="#tri"/></svg></span><span>Cube</span><span class="tail"><svg class="i"><use href="#eye"/></svg><svg class="i"><use href="#photo"/></svg></span></li>
      <li class="l3"><svg class="tw"><use href="#right"/></svg><svg class="i gr"><use href="#mesh"/></svg><span>Cube</span><span class="chip far rd"><svg class="i"><use href="#sphere"/></svg></span></li>
      <li class="l3"><svg class="tw"><use href="#right"/></svg><svg class="i bu"><use href="#wrenchline"/></svg><span>Modifiers</span><span class="chip far bu"><svg class="i"><use href="#nodes"/></svg></span></li>
      <li class="l2"><svg class="tw"><use href="#right"/></svg><svg class="i big or"><use href="#bulb"/></svg><span>Light</span><svg class="i far2 gr"><use href="#lightdata"/></svg><span class="tail"><svg class="i"><use href="#eye"/></svg><svg class="i"><use href="#photo"/></svg></span></li>
      <li class="l2"><svg class="tw"><use href="#right"/></svg><svg class="i big or"><use href="#tri"/></svg><span>sugar crystal</span><svg class="i far2 gr"><use href="#mesh"/></svg><span class="tail"><svg class="i"><use href="#eye"/></svg><svg class="i"><use href="#photo"/></svg></span></li>
    </ul>
  </section>
  <section class="panel props" aria-label="Properties">
    <header class="bar pr-bar">
      <button class="btn drop" aria-label="Editor type"><svg class="i"><use href="#propsed"/></svg><svg class="c"><use href="#chev"/></svg></button>
      <label class="find"><svg class="i"><use href="#search"/></svg><input type="text" placeholder="Search" aria-label="Search properties"></label>
      <button class="btn mini" aria-label="Options"><svg class="c"><use href="#chev"/></svg></button>
    </header>
    <div class="pr-main">
      <nav class="ptabs">
        <button aria-label="Tool"><svg class="i"><use href="#tool"/></svg></button><hr>
        <button aria-label="Render"><svg class="i"><use href="#render"/></svg></button><button aria-label="Output"><svg class="i"><use href="#output"/></svg></button><button aria-label="View layer"><svg class="i"><use href="#images"/></svg></button><button aria-label="Scene"><svg class="i"><use href="#scene"/></svg></button><button class="rd" aria-label="World"><svg class="i"><use href="#world"/></svg></button><hr>
        <button class="wh" aria-label="Collection"><svg class="i"><use href="#boxline"/></svg></button><hr>
        <button class="or" aria-label="Object"><svg class="i"><use href="#object"/></svg></button><button class="on" aria-label="Modifiers"><svg class="i"><use href="#wrench"/></svg></button><button class="bu" aria-label="Particles"><svg class="i"><use href="#particles"/></svg></button><button class="bu" aria-label="Physics"><svg class="i"><use href="#physics"/></svg></button><button class="bu" aria-label="Constraints"><svg class="i"><use href="#constraint"/></svg></button><button class="gr" aria-label="Data"><svg class="i"><use href="#mesh"/></svg></button><button class="rd" aria-label="Material"><svg class="i"><use href="#sphere"/></svg></button><hr>
        <button class="rd" aria-label="Texture"><svg class="i"><use href="#texture"/></svg></button><hr>
      </nav>
      <div class="pr-body">
        <div class="path"><svg class="i"><use href="#object"/></svg><span>Cube</span><svg class="tw"><use href="#right"/></svg><svg class="i"><use href="#nodes"/></svg><span>GeometryNodes</span><button class="bare" aria-label="Pin"><svg class="i"><use href="#pinline"/></svg></button></div>
        <button class="add"><svg viewBox="0 0 10 10"><path d="M5 0v10M0 5h10" stroke="currentColor" stroke-width="1.300"/></svg><span>Add Modifier</span></button>
        <div class="mod">
          <div class="modhead"><svg class="tw"><use href="#down"/></svg><svg class="i"><use href="#nodes"/></svg>
            <div class="join grow"><input class="name" aria-label="Modifier name" value="GeometryNo..."><button class="btn tog" aria-label="On cage"><svg class="i"><use href="#mesh"/></svg></button><button class="btn tog on" aria-label="Edit mode"><svg class="i"><use href="#edit"/></svg></button><button class="btn tog on" aria-label="Realtime"><svg class="i"><use href="#display"/></svg></button><button class="btn tog on" aria-label="Render"><svg class="i"><use href="#photoblue"/></svg></button><button class="btn mini" aria-label="More"><svg class="tw"><use href="#down"/></svg></button></div>
            <button class="bare" aria-label="Remove"><svg class="i"><use href="#x"/></svg></button><svg class="i grip"><use href="#grip"/></svg></div>
          <div class="join treerow"><button class="btn drop" aria-label="Browse"><svg class="i"><use href="#tree"/></svg><svg class="c"><use href="#chev"/></svg></button><input class="name" aria-label="Node group" value="Geometry Nodes"><button class="btn tog dim" aria-label="Fake user"><svg class="i"><use href="#shield"/></svg></button><button class="btn tog" aria-label="Duplicate"><svg class="i"><use href="#dup"/></svg></button><button class="btn tog" aria-label="Unlink"><svg class="i"><use href="#x"/></svg></button></div>
          <div class="prop"><label for="p1">Sugar Density</label><input id="p1" value="200.000"><button aria-label="Use attribute"><svg class="i"><use href="#attr"/></svg></button><b></b></div>
          <div class="prop"><label for="p2">Scale Min</label><input id="p2" value="0.100"><button aria-label="Use attribute"><svg class="i"><use href="#attr"/></svg></button><b></b></div>
          <div class="prop"><label for="p3">Scale Max</label><input id="p3" value="0.400"><button aria-label="Use attribute"><svg class="i"><use href="#attr"/></svg></button><b></b></div>
          <button class="fold manage"><svg class="tw"><use href="#down"/></svg>Manage</button>
          <div class="sub"><button class="fold"><svg class="tw"><use href="#right"/></svg>Bake</button><button class="fold"><svg class="tw"><use href="#right"/></svg>Named Attributes</button></div>
        </div>
      </div>
    </div>
  </section>
</aside>
<footer class="status"></footer>
<script src="scene.js"></script>
</body>
</html>
```

FILE: styles.css
```css
* { box-sizing: border-box; }
.app { margin: 0; height: 100vh; min-height: 700px; padding-top: 2px; display: grid; grid-template-columns: minmax(0, 1fr) 337px; grid-template-rows: minmax(0, 1fr) 3px; gap: 3px; background: #181818; color: #dcdcdc; font: 12px/18px Roboto, Inter, sans-serif; overflow: hidden; text-shadow: 0 1px 1px rgba(0, 0, 0, .4); }
.defs { position: absolute; width: 0; height: 0; }
button, input, select { font: inherit; color: inherit; border: 0; margin: 0; padding: 0; background: none; text-shadow: inherit; min-width: 0; outline: 0; }
select { appearance: none; flex: 1; }
a { color: inherit; text-decoration: none; }
ul { list-style: none; margin: 0; padding: 0; }
h3, h4, p { margin: 0; font: inherit; }
.i { width: 14px; height: 14px; flex: none; display: block; overflow: visible; }
.c { width: 8px; height: 8px; flex: none; display: block; }
.tw { width: 9px; height: 9px; flex: none; color: #bbb; }
.or { color: #bd8250; }
.gr { color: #45b58d; }
.rd { color: #a95a62; }
.bu { color: #6480c4; }
.work { display: grid; grid-template-rows: minmax(0, 390fr) minmax(0, 499fr); gap: 2px; }
.side { display: grid; grid-template-rows: minmax(0, 284fr) minmax(0, 604fr); gap: 3px; }
.status { grid-column: 1 / -1; background: #2b2b2b; }
.panel { position: relative; overflow: hidden; border-radius: 6px; }

.bar { position: relative; display: flex; align-items: center; height: 26px; padding: 0 8px 0 5px; }
.side-l, .side-r { flex: 1 1 0; display: flex; align-items: center; gap: 6px; }
.side-r { justify-content: flex-end; gap: 7px; }
.mid { display: flex; align-items: center; gap: 7px; }
.menu { display: flex; gap: 14px; padding-left: 5px; }
.join { display: flex; gap: 1px; background: #3a3a3a; border-radius: 4px; overflow: hidden; }
.btn { height: 19px; border-radius: 4px; display: flex; align-items: center; justify-content: center; gap: 3px; background: #282828; box-shadow: inset 0 0 0 1px #3a3a3a; flex: none; }
.join .btn { border-radius: 0; box-shadow: none; }
.drop { width: 31px; }
.mini { width: 20px; }
.tog { width: 18px; background: #545454; box-shadow: none; }
.dim .i { opacity: .7; }
.faint { color: #777; }
.faint .c { opacity: .4; }
.on.btn { background: #4d6fb0; color: #fff; }
.pick { height: 19px; display: flex; align-items: center; gap: 5px; padding: 0 6px 0 5px; background: #282828; box-shadow: inset 0 0 0 1px #3a3a3a; border-radius: 4px; }
.mode { width: 111px; gap: 7px; padding-right: 3px; }
.orient { width: 77px; gap: 7px; padding-right: 3px; }

.viewport { background: #3d3d3d; display: flex; flex-direction: column; }
.scene { position: absolute; inset: 0; width: 100%; height: 100%; }
.vp-bar { background: rgba(48, 48, 48, .8); flex: none; }
.vp-mid { padding-right: 24px; }
.shade .btn { width: 19px; }
.vp-bar .side-r { gap: 8px; }
.vp-main { position: relative; flex: 1; min-height: 0; display: flex; }
.vp-left { flex: 1; }
.selmodes { width: 109px; height: 24px; padding: 2px 9px 3px 5px; background: rgba(48, 48, 48, .8); border-radius: 0 0 6px 0; }
.selmodes .tog:first-child { border-radius: 3px 0 0 3px; }
.selmodes .tog:last-child { border-radius: 0 3px 3px 0; }
.vp-row { display: flex; gap: 18px; padding: 9px 5px; }
.info { font-weight: 500; color: #e8e8e8; text-shadow: 0 0 2px #000, 0 1px 2px #000; margin-top: -1px; }
.tools { display: flex; flex-direction: column; gap: 6px; }
.tgroup { display: flex; flex-direction: column; gap: 1px; border-radius: 4px; overflow: hidden; flex: none; }
.t { width: 38px; height: 34px; background: #282828; display: grid; place-items: center; position: relative; }
.t svg { width: 24px; height: 24px; overflow: visible; }
.t.on { background: #4d6fb0; }
.more::after { content: ""; position: absolute; right: 2px; bottom: 2px; border-bottom: 4px solid #999; border-left: 4px solid transparent; }
.nav { width: 100px; padding-top: 37px; display: flex; flex-direction: column; gap: 2px; }
.axis { width: 100px; height: 77px; flex: none; }
.axis text { font: 600 11px Inter, sans-serif; text-anchor: middle; fill: #1c1c1c; text-shadow: none; }
.n { width: 28px; height: 28px; margin-left: 56px; border-radius: 50%; background: #2b2b2b; display: grid; place-items: center; flex: none; }
.n svg { width: 16px; height: 16px; }
.vp-right { width: 271px; display: flex; flex-direction: column; }
.options { align-self: flex-end; width: 81px; height: 25px; padding: 3px 7px 0 9px; background: #353535; border-radius: 0 0 0 6px; flex: none; }
.opt { width: 65px; padding-left: 4px; gap: 7px; }
.vp-side { display: flex; flex: 1; }
.npanel { flex: 1; margin-right: 7px; padding: 3px 9px 0; background: #3c3c3c; }
.npanel h3 { height: 24px; line-height: 26px; color: #c6c6c6; }
.vec { height: 58px; display: flex; gap: 24px; }
.nums { width: 174px; display: grid; grid-auto-rows: 1fr; gap: 1px; border-radius: 4px; overflow: hidden; }
.nums.wide { width: 100%; }
.num { display: flex; align-items: center; background: #545454; padding: 0 13px 0 15px; min-height: 0; }
.num span { flex: none; }
.num input, .trio input, .prop input { font-family: Inter, sans-serif; }
.num input { flex: 1; width: 20px; text-align: right; height: 16px; }
.locks { display: grid; grid-auto-rows: 1fr; color: #a0a0a0; }
.locks button { display: grid; place-items: center; }
.euler { margin-top: 4px; padding: 0 2px 0 7px; }
.euler + h3 { height: 23px; line-height: 24px; }
.marked { position: relative; }
.marked::after { content: ""; position: absolute; inset: 2px -8px -7px; border: 4px solid #ea50f2; border-radius: 20px; pointer-events: none; z-index: 2; }
.vtabs { width: 20px; background: #181818; padding-top: 5px; display: flex; flex-direction: column; gap: 4px; }
.vtabs button { width: 17px; height: 41px; writing-mode: vertical-rl; background: #242424; box-shadow: inset 0 0 0 1px #3a3a3a; border-radius: 0 4px 4px 0; color: #b8b8b8; line-height: 17px; }
.vtabs .on { background: #3a3a3a; color: #fff; }

.editor { background-color: #1d1d1d; background-image: radial-gradient(circle, #2b2b2b 1px, transparent 1px), radial-gradient(circle, #222 1px, transparent 1px); background-size: 84px 84px, 17px 17px; background-position: 69px 30px, 2px 12px; }
.wires { position: absolute; left: 0; top: 0; }
.ne-bar { height: 28px; }
.ne-bar .drop { width: 32px; }
.ne-mid { padding-right: 28px; gap: 8px; }
.modif { width: 79px; padding: 0 3px 0 8px; }
.faded { color: #8b8b8b; background: #303030; padding: 1px; }
.faded .btn { background: #1f1f1f; height: 18px; }
.faded .tog { background: #363636; width: 19px; }
.faded svg { opacity: .75; }
.treename { width: 101px; padding-left: 7px; background: #1d1d1d; }
.bare { display: grid; place-items: center; color: #fff; }
.upbtn { background: #333; color: #777; }
.ne-bar .side-r { gap: 5px; }
.crumb { position: relative; display: flex; align-items: center; gap: 9px; padding: 11px 15px; }
.vscroll { position: absolute; right: 2px; top: 36px; bottom: 8px; width: 3px; background: #303030; border-radius: 2px; }
.hscroll { position: absolute; left: 0; right: 8px; bottom: 3px; height: 3px; background: #303030; }
.expand { position: absolute; right: 0; top: 42px; width: 6px; height: 10px; color: #bbb; }
.expand svg { display: block; }
.shelf { left: 0; right: auto; }

.node { position: absolute; width: 117px; background: #303030; border-radius: 4px; box-shadow: 0 2px 6px rgba(0, 0, 0, .8); font-size: 10px; line-height: 16px; padding-bottom: 4px; }
.node h4 { height: 17px; line-height: 15px; padding: 0 0 1px 9px; margin-bottom: 3px; display: flex; align-items: center; gap: 5px; border-radius: 4px 4px 0 0; white-space: nowrap; }
.node h4.green { background: #386f5c; }
.node h4.red { background: #7c334b; }
.node h4.blue { background: #33607f; }
.node.io { box-shadow: 0 0 0 1px #151515, 0 2px 6px rgba(0, 0, 0, .8); padding-bottom: 3px; }
.node.io h4 { height: 18px; background: #1e1e1e; }
.node.picked { outline: 1px solid #fff; outline-offset: -1px; }
.node h4 .c, .node .pick .c { width: 8px; height: 8px; opacity: .8; }
.node li { position: relative; height: 18px; line-height: 19px; padding: 0 9px; display: flex; }
.node li:nth-child(even) { height: 19px; }
.node li.out { justify-content: flex-end; }
.node li label { display: flex; align-items: center; gap: 3px; }
.node input[type="checkbox"] { appearance: none; width: 11px; height: 11px; border-radius: 2px; background: #545454; }
.near { margin-top: 1px; }
.gap2 { margin-top: 2px; }
.gap3 { margin-top: 3px; }
.inst { margin-top: 2px; }
.s { position: absolute; left: -4px; top: 5px; width: 8px; height: 8px; border-radius: 50%; box-shadow: 0 0 0 1px #1a1a1a; }
.out .s { left: auto; right: -4px; }
.s.d { border-radius: 1px; transform: rotate(45deg); width: 7px; height: 7px; }
.s.hole::after { content: ""; position: absolute; inset: 2px; border-radius: 50%; background: #202020; }
.geo { background: #62d3a7; }
.val { background: #a1a1a1; }
.vec3 { background: #6363c7; }
.rot { background: #a063c7; }
.bool { background: #cca6d6; }
.int { background: #598c5c; }
.mat { background: #b33385; }
.obj { background: #ed9e5c; }
.empty { background: #303030; border: 1px solid #999; }
.s.multi { height: 16px; top: 1px; border-radius: 4px; }
.node .pick { height: 16px; margin: 6px 9px 0; padding: 0 2px 0 7px; }
.node .pick.far { margin-top: 8px; }
.node .num { position: relative; height: 16px; margin: 2px 9px 0; border-radius: 3px; padding: 0 11px 0 12px; }
.node .num .s { left: -13px; top: 4px; }
.two { display: grid; grid-template-columns: 1fr 1fr; gap: 1px; margin: 6px 9px 0; height: 16px; border-radius: 3px; overflow: hidden; }
.two button { background: #545454; }
.two .on { background: #4d6fb0; color: #fff; }
.objref { position: relative; display: flex; align-items: center; gap: 5px; height: 16px; margin: 2px 9px 0; padding: 0 2px 0 3px; background: #1d1d1d; box-shadow: inset 0 0 0 1px #3a3a3a; border-radius: 3px; }
.objref .i { width: 12px; height: 12px; }
.objref input { flex: 1; width: 40px; }
.objref .s { left: -13px; top: 4px; }
.trio { height: 48px; margin: 1px 9px 2px; display: grid; grid-template-rows: repeat(3, minmax(0, 1fr)); gap: 1px; border-radius: 3px; overflow: hidden; }
.trio input { background: #545454; text-align: center; height: 100%; line-height: 14px; }
.trio + .near { margin-top: 0; }
.n-in { left: 74px; top: 85px; width: 118px; }
.n-dist { left: 224px; top: 176px; width: 143px; }
.n-info { left: 400px; top: 218px; }
.n-rv1 { left: 556px; top: 265px; }
.n-rv2 { left: 698px; top: 317px; }
.n-iop { left: 841px; top: 151px; }
.n-join { left: 959px; top: 67px; }
.n-out { left: 1092px; top: 65px; width: 119px; }

.outliner { background: #282828; }
.ol-bar { height: 26px; padding: 0 7px; gap: 5px; }
.ol-bar .drop { width: 32px; box-shadow: inset 0 0 0 1px #3c3c3c; }
.find { display: flex; align-items: center; gap: 7px; width: 119px; height: 19px; padding: 0 5px; background: #1d1d1d; box-shadow: inset 0 0 0 1px #3a3a3a; border-radius: 4px; }
.find input { flex: 1; width: 60px; }
.find input::placeholder { color: #6f6f6f; opacity: 1; }
.ol-bar .find { margin-left: 17px; }
.ol-bar .last { margin-left: auto; background: #282828; }
.ol-bar .tog { width: 20px; }
.rows { position: relative; height: 100%; background: repeating-linear-gradient(#282828 0 20px, #2b2b2b 20px 40px); color: #c2c2c2; }
.rows::before { content: ""; position: absolute; left: 29px; top: 45px; width: 1px; height: 110px; background: #666; }
.rows li { height: 20px; display: flex; align-items: center; gap: 7px; padding-right: 13px; line-height: 20px; }
.rows li > span:not(.chip, .tail) { padding-top: 1px; }
.rows .l0 { padding-left: 23px; color: #cfcfcf; }
.rows .l1 { padding-left: 25px; gap: 4px; }
.rows .l2 { padding-left: 45px; gap: 4px; }
.rows .l3 { padding-left: 65px; gap: 4px; }
.rows .i { color: #d8d8d8; }
.rows .or, .rows .or .i { color: #bd8250; }
.rows .gr, .rows .gr .i { color: #45b58d; }
.rows .rd .i { color: #a95a62; }
.rows .bu, .rows .bu .i { color: #6480c4; }
.rows .l2 > .tw, .rows .l1 > .tw { margin-right: 2px; }
.rows .l3 > .tw { margin-right: 4px; }
.l2 > .big { margin: 0 3px; }
.l3 > .i { margin-right: 3px; }
.chip { width: 20px; height: 18px; border-radius: 4px; background: #4f4f4f; box-shadow: inset 0 0 0 1px #666; display: grid; place-items: center; }
.far.chip { margin-left: 15px; }
.far2 { margin-left: 18px; }
.sel { background: #3b4d7c; }
.sel .chip { background: #62719b; box-shadow: none; }
.sel > span:nth-of-type(2) { color: #e6a44e; }
.tail { margin-left: auto; display: flex; align-items: center; gap: 6px; }
.tail .i { color: #e6e6e6; }
.tail input { appearance: none; width: 10px; height: 10px; border-radius: 1px; background: #e0e0e0; position: relative; }
.tail input::after { content: ""; position: absolute; left: 2px; top: 2px; width: 6px; height: 3px; border: solid #222; border-width: 0 0 2px 2px; transform: rotate(-45deg); }

.props { background: #303030; display: flex; flex-direction: column; }
.pr-bar { height: 25px; padding: 0 7px 0 8px; justify-content: space-between; flex: none; }
.pr-bar .drop { width: 32px; }
.pr-bar .find { margin-right: 12px; }
.pr-main { display: flex; flex: 1; }
.ptabs { width: 28px; background: #1d1d1d; padding: 7px 0 0 2px; display: flex; flex-direction: column; color: #a5a5a5; }
.ptabs button { height: 28px; display: grid; place-items: center; flex: none; border-radius: 4px 0 0 4px; }
.ptabs .rd { color: #a95a62; }
.ptabs .gr { color: #45b58d; }
.ptabs .or { color: #bd8250; }
.ptabs .wh { color: #ddd; }
.ptabs .on { background: #303030; color: #7090ee; }
.ptabs hr { width: 100%; margin: 3px 0 4px; border: 0; height: 1px; background: #161616; }
.pr-body { flex: 1; padding: 8px 7px 0 8px; }
.path { display: flex; align-items: center; height: 20px; padding: 0 3px; gap: 9px; }
.path .tw { margin: 0 0 0 6px; }
.path .bare { margin-left: auto; color: #999; }
.add { display: flex; align-items: center; width: 100%; height: 19px; margin-top: 16px; padding-left: 7px; background: #545454; border-radius: 4px; }
.add svg { width: 10px; height: 10px; }
.add span { flex: 1; }
.mod { margin-top: 10px; border: 1px solid #4a6cae; border-radius: 4px; background: #3d3d3d; overflow: hidden; }
.modhead { display: flex; align-items: center; height: 26px; padding: 0 4px 0 7px; }
.modhead > .tw + .i { margin: 0 12px 0 6px; }
.name { flex: 1; width: 60px; background: #1d1d1d; padding-left: 7px; }
.grow { flex: 1; }
.mod .tog, .mod .mini { width: 19px; }
.modhead .bare { margin: 0 14px 0 5px; }
.treerow { margin: 7px 8px 6px; }
.mod .drop { width: 30px; }
.prop { display: grid; grid-template-columns: 98px minmax(0, 1fr) 19px 25px; align-items: center; height: 19px; margin: 0 6px 6px 8px; }
.prop label { text-align: right; white-space: nowrap; }
.prop input { height: 19px; margin: 0 1px 0 10px; background: #545454; text-align: center; border-radius: 4px 0 0 4px; }
.prop button { height: 19px; background: #545454; display: grid; place-items: center; border-radius: 0 4px 4px 0; }
.prop .i { width: 16px; height: 16px; }
.prop b { width: 4px; height: 4px; border-radius: 50%; background: #ccc; justify-self: center; }
.fold { display: flex; align-items: center; gap: 10px; height: 24px; padding-left: 12px; width: 100%; }
.manage { height: 21px; }
.sub { background: #353535; padding: 6px 0 9px; }
```

FILE: scene.js
```js
(function () {
  var NS = "http://www.w3.org/2000/svg";
  var seed = 7;
  function rnd() {
    seed = (seed * 1664525 + 1013904223) % 4294967296;
    return seed / 4294967296;
  }
  function add(parent, name, attrs) {
    var el = document.createElementNS(NS, name);
    Object.keys(attrs).forEach(function (k) { el.setAttribute(k, attrs[k]); });
    parent.appendChild(el);
  }

  // Ground plane: one projective map takes grid coordinates to the screen.
  var G = -0.0852, H = 0.0557;
  function project(i, j) {
    var d = 1 + G * i + H * j;
    return [(656 + 1373 * G * i - 975 * H * j) / d, (197 - 387 * G * i - 403 * H * j) / d];
  }
  function ray(grid, vanish, p) {
    var k = 3000 / Math.hypot(p[0] - vanish[0], p[1] - vanish[1]);
    add(grid, "line", { x1: vanish[0], y1: vanish[1],
      x2: vanish[0] + (p[0] - vanish[0]) * k, y2: vanish[1] + (p[1] - vanish[1]) * k });
  }
  var grid = document.getElementById("grid");
  for (var n = -12; n <= 11; n++) {
    if (n === 0) continue;
    ray(grid, [-975, -403], project(n, 0));
    ray(grid, [1373, -387], project(0, n));
  }

  // Cube: three faces, each scattered with outlined crystals.
  var T = [632, 34], L = [491, 111], R = [814, 87], F = [697, 168];
  var LB = [511, 299], B = [687, 386], RB = [799, 251];
  var cube = document.getElementById("crystals");
  function face(q, color) { add(cube, "polygon", { points: q.join(" "), fill: color }); }
  function at(q, u, v) {
    return [0, 1].map(function (k) {
      return (q[0][k] * (1 - u) + q[1][k] * u) * (1 - v) + (q[3][k] * (1 - u) + q[2][k] * u) * v;
    });
  }
  function ring(x, y, r, sx, sy, turn, sides) {
    var out = [];
    for (var k = 0; k < sides; k++) {
      var a = turn + (k + (rnd() - 0.5) * 0.4) * 2 * Math.PI / sides;
      var rr = r * (0.75 + rnd() * 0.45);
      out.push((x + Math.cos(a) * rr * sx).toFixed(1) + "," + (y + Math.sin(a) * rr * sy).toFixed(1));
    }
    return out;
  }
  function scatter(q, count, min, max, sx, sy, light) {
    for (var k = 0; k < count; k++) {
      var edge = rnd() < 0.14;
      var u = rnd(), v = rnd();
      if (edge) { if (rnd() < 0.5) u = Math.round(u); else v = Math.round(v); }
      var p = at(q, u, v);
      var r = min + Math.pow(rnd(), 1.4) * (max - min);
      var tone = Math.round(light + (rnd() - 0.5) * 50);
      var turn = rnd() * 6.28;
      add(cube, "polygon", { points: ring(p[0], p[1], r, sx, sy, turn, 4 + Math.floor(rnd() * 3)).join(" "),
        fill: "rgb(" + tone + "," + (tone + 2) + "," + (tone + 3) + ")",
        stroke: "#eda04f", "stroke-width": 1.7, "stroke-linejoin": "round" });
      if (rnd() < 0.3) {
        add(cube, "polygon", { points: ring(p[0] + 1, p[1] + 1, r * 0.45, sx, sy, turn, 3).join(" "), fill: "#65625d" });
      }
    }
  }
  face([L, T, R, F], "#8f9193");
  face([L, F, B, LB], "#858785");
  face([F, R, RB, B], "#3a3431");
  scatter([L, T, R, F], 1250, 2, 6, 1.15, 0.8, 148);
  scatter([F, R, RB, B], 1500, 2, 6.2, 0.75, 1.05, 128);
  scatter([L, F, B, LB], 950, 2.5, 7.5, 1, 1, 142);
})();
```
